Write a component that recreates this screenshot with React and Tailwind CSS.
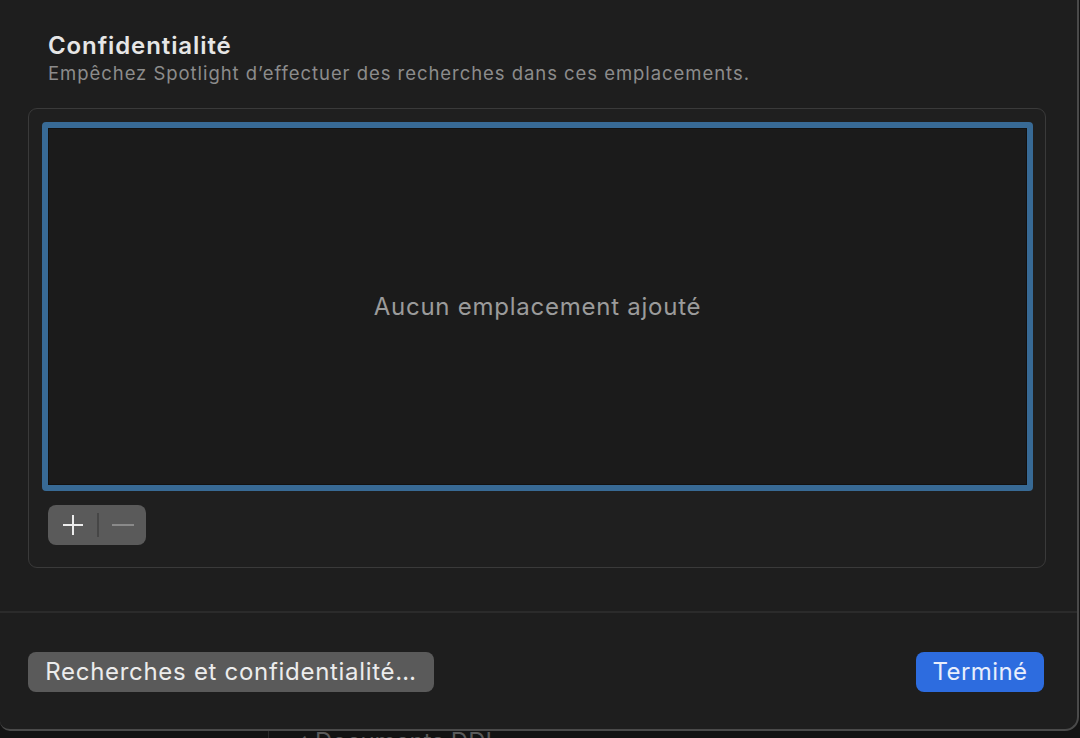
const font = { fontFamily: 'Inter, "Noto Sans", sans-serif' };

const PlusMinus = () => (
  <div className="flex h-[40px] w-[98px] items-center rounded-[8px] bg-[#5a5a5a]">
    <button className="flex h-full w-[49px] items-center justify-center">
      <svg width="22" height="22" viewBox="0 0 22 22">
        <path d="M11 1v20M1 11h20" stroke="#ececec" strokeWidth="2" />
      </svg>
    </button>
    <div className="h-[24px] w-[2px] bg-[#464646]" />
    <button className="flex h-full flex-1 items-center justify-center">
      <svg width="22" height="4" viewBox="0 0 22 4">
        <path d="M0 2h22" stroke="#8a8a8a" strokeWidth="2" />
      </svg>
    </button>
  </div>
);

export default function App() {
  return (
    <div className="flex h-[738px] w-[1080px] flex-col overflow-hidden bg-[#131313]" style={font}>
      <div className="flex h-[731px] w-[1079px] shrink-0 flex-col rounded-br-[14px] rounded-bl-[10px] border-b-2 border-r-2 border-[#4a4a4a] bg-[#1e1e1e]">
        <div className="px-[28px] pt-[31px]">
          <div className="pl-[20px]">
            <h2 className="text-[24px] font-semibold leading-[30px] tracking-[0.9px] text-[#e6e6e6]">Confidentialité</h2>
            <p className="text-[18.5px] leading-[24px] tracking-[0.95px] text-[#8c8c8c]">
              Empêchez Spotlight d’effectuer des recherches dans ces emplacements.
            </p>
          </div>

          <div className="mt-[23px] h-[460px] w-[1018px] rounded-[9px] border border-[#3a3a3a] bg-[#1f1f1f] px-[13px] pt-[13px]">
            <div className="h-[369px] w-[991px] rounded-[4px] border-[6px] border-[#386a95] bg-[#1b1b1b]">
              <div className="flex h-full items-center justify-center border border-[#121212] text-[24px] tracking-[0.75px] text-[#9b9b9b]">
                Aucun emplacement ajouté
              </div>
            </div>
            <div className="mt-[14px] pl-[6px]">
              <PlusMinus />
            </div>
          </div>
        </div>

        <div className="mt-[43px] h-[2px] w-full bg-[#2b2b2b]" />

        <div className="flex items-center justify-between px-[28px] pt-[39px]">
          <button className="h-[40px] w-[406px] rounded-[8px] bg-[#5a5a5a] text-[24px] tracking-[0.7px] text-[#ececec]">
            Recherches et confidentialité…
          </button>
          <button className="mr-[5px] h-[40px] w-[128px] rounded-[8px] bg-[#2d6cdf] text-[24px] tracking-[0.4px] text-[#e8eefc]">
            Terminé
          </button>
        </div>
      </div>
      <div className="ml-[268px] flex h-[7px] items-start overflow-hidden">
        <div className="h-[7px] w-[1px] bg-[#2a2a2a]" />
        <div className="ml-[18px] -mt-[4px] text-[24px] leading-[30px] text-[#5a5a5a]">✓ Documents DDL</div>
      </div>
    </div>
  );
}
